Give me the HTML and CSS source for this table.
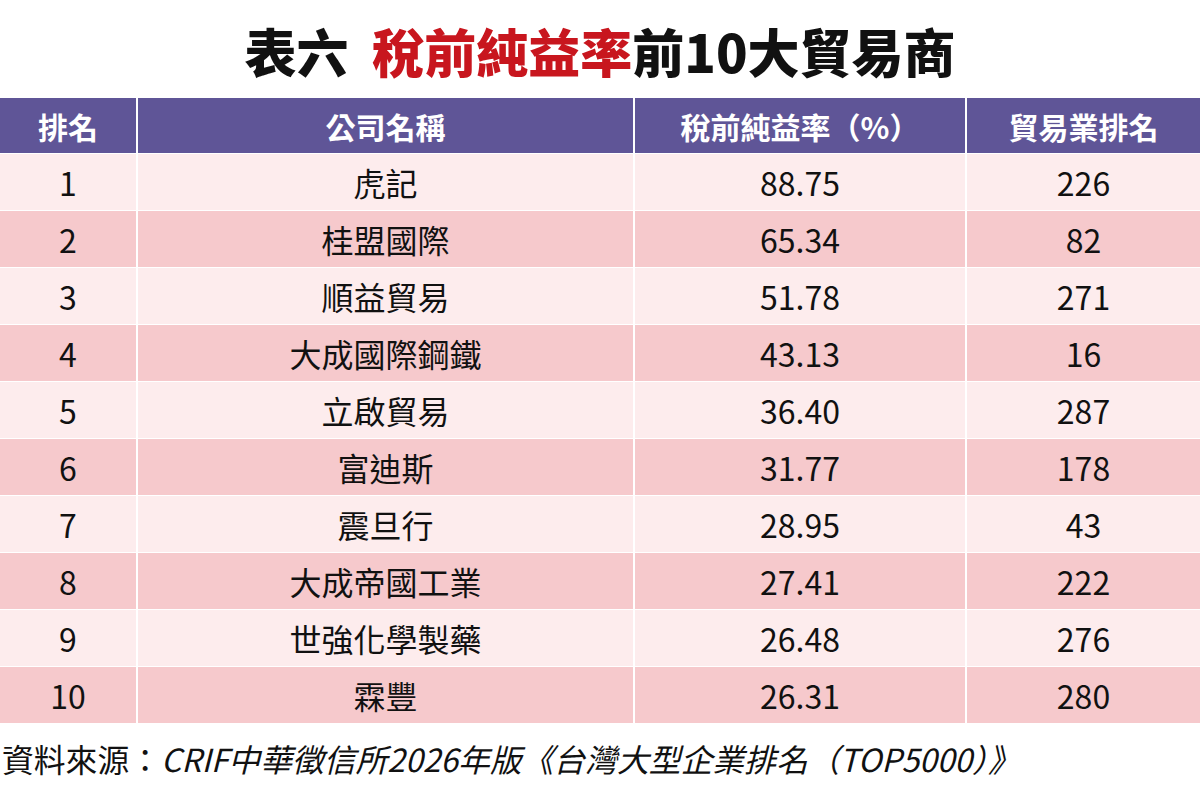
FILE: index.html
```html
<!DOCTYPE html>
<html lang="zh-Hant">
<head>
<meta charset="utf-8">
<title>表六 稅前純益率前10大貿易商</title>
<link rel="stylesheet" href="styles.css">
</head>
<body>
<div class="page">
  <h1 class="title">表六&nbsp;&nbsp;<span class="hl">稅前純益率</span>前10大貿易商</h1>
  <div class="table">
    <div class="cell head">排名</div><div class="cell head">公司名稱</div><div class="cell head">稅前純益率（%）</div><div class="cell head">貿易業排名</div>
    <div class="cell l">1</div><div class="cell l">虎記</div><div class="cell l">88.75</div><div class="cell l">226</div>
    <div class="cell d">2</div><div class="cell d">桂盟國際</div><div class="cell d">65.34</div><div class="cell d">82</div>
    <div class="cell l">3</div><div class="cell l">順益貿易</div><div class="cell l">51.78</div><div class="cell l">271</div>
    <div class="cell d">4</div><div class="cell d">大成國際鋼鐵</div><div class="cell d">43.13</div><div class="cell d">16</div>
    <div class="cell l">5</div><div class="cell l">立啟貿易</div><div class="cell l">36.40</div><div class="cell l">287</div>
    <div class="cell d">6</div><div class="cell d">富迪斯</div><div class="cell d">31.77</div><div class="cell d">178</div>
    <div class="cell l">7</div><div class="cell l">震旦行</div><div class="cell l">28.95</div><div class="cell l">43</div>
    <div class="cell d">8</div><div class="cell d">大成帝國工業</div><div class="cell d">27.41</div><div class="cell d">222</div>
    <div class="cell l">9</div><div class="cell l">世強化學製藥</div><div class="cell l">26.48</div><div class="cell l">276</div>
    <div class="cell d">10</div><div class="cell d">霖豐</div><div class="cell d">26.31</div><div class="cell d">280</div>
  </div>
  <p class="source">資料來源：<span class="it">CRIF中華徵信所2026年版《台灣大型企業排名（TOP5000）》</span></p>
</div>
</body>
</html>
```

FILE: styles.css
```css
html, body {
  margin: 0;
  padding: 0;
  background: #ffffff;
}
body {
  font-family: "Noto Sans CJK TC", "Noto Sans", sans-serif;
  color: #111111;
}
.page {
  width: 1200px;
  height: 792px;
  overflow: hidden;
}
.title {
  margin: 0;
  height: 98px;
  line-height: 102px;
  text-align: center;
  font-size: 52px;
  font-weight: 900;
  color: #111111;
  letter-spacing: 0;
}
.title .hl {
  color: #c8161e;
}
.table {
  display: grid;
  grid-template-columns: 136px 495px 330px 1fr;
  grid-template-rows: 55px repeat(10, 56px);
  column-gap: 2px;
  row-gap: 1px;
  background: #ffffff;
}
.cell {
  display: flex;
  align-items: center;
  justify-content: center;
  font-size: 32px;
  line-height: 1;
}
.head {
  background: #5f5597;
  color: #ffffff;
  font-weight: 700;
  font-size: 30px;
}
.l {
  background: #fdeced;
}
.d {
  background: #f6c9cc;
}
.source {
  margin: 0;
  padding: 16px 0 0 2px;
  font-size: 31.8px;
  line-height: 38px;
  color: #111111;
}
.source .it {
  font-style: italic;
}
```
